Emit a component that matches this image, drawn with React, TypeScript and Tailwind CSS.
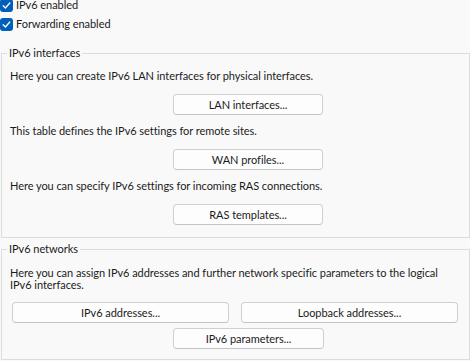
import React from "react";

function Check() {
  return (
    <span className="flex h-[13px] w-[13px] shrink-0 items-center justify-center rounded-[3px] bg-[#005fb8]">
      <svg width="9" height="9" viewBox="0 0 9 9" fill="none">
        <path d="M1.2 4.8 L3.4 7 L7.8 2" stroke="white" strokeWidth="1.3" strokeLinecap="round" strokeLinejoin="round" />
      </svg>
    </span>
  );
}

function Btn({ label, className = "" }: { label: string; className?: string }) {
  return (
    <button
      className={
        "flex h-[21px] items-center justify-center rounded-[4px] border border-[#d0d0d0] border-b-[#c4c4c4] bg-[#fdfdfd] text-[11px] leading-[16px] tracking-[-0.05px] text-[#1b1b1b] " +
        className
      }
      style={{ fontFamily: "Lato, sans-serif" }}
    >
      {label}
    </button>
  );
}

export default function App() {
  return (
    <div
      className="h-[361px] w-[470px] overflow-hidden bg-[#f9f9f9] text-[11px] leading-[16px] tracking-[-0.05px] text-[#1b1b1b]"
      style={{ fontFamily: "Lato, sans-serif" }}
    >
      <div className="-mt-[3px] flex flex-col gap-[3px]">
        <label className="flex h-[16px] items-center gap-[3px]">
          <Check />
          <span>IPv6 enabled</span>
        </label>
        <label className="flex h-[16px] items-center gap-[3px]">
          <Check />
          <span>Forwarding enabled</span>
        </label>
      </div>

      <fieldset className="ml-[1px] mt-[13px] w-[469px] border border-[#dcdcdc] p-0">
        <legend className="ml-[5px] px-[2px]">IPv6 interfaces</legend>
        <div className="px-[8px] pb-[12px] pt-[7px]">
          <p>Here you can create IPv6 LAN interfaces for physical interfaces.</p>
          <Btn label="LAN interfaces..." className="ml-[163px] mt-[10px] w-[150px]" />
          <p className="mt-[8px]">This table defines the IPv6 settings for remote sites.</p>
          <Btn label="WAN profiles..." className="ml-[163px] mt-[10px] w-[150px]" />
          <p className="mt-[8px]">Here you can specify IPv6 settings for incoming RAS connections.</p>
          <Btn label="RAS templates..." className="ml-[163px] mt-[10px] w-[150px]" />
        </div>
      </fieldset>

      <fieldset className="ml-[1px] mt-[3px] w-[469px] border border-[#dcdcdc] p-0">
        <legend className="ml-[5px] px-[2px]">IPv6 networks</legend>
        <div className="px-[8px] pb-[10px] pt-[10px]">
          <p className="whitespace-nowrap leading-[12px]">
            Here you can assign IPv6 addresses and further network specific parameters to the logical
            <br />
            IPv6 interfaces.
          </p>
          <div className="ml-[2px] mt-[11px] flex gap-[12px]">
            <Btn label="IPv6 addresses..." className="w-[217px]" />
            <Btn label="Loopback addresses..." className="w-[217px]" />
          </div>
          <Btn label="IPv6 parameters..." className="ml-[163px] mt-[5px] w-[151px]" />
        </div>
      </fieldset>
    </div>
  );
}
